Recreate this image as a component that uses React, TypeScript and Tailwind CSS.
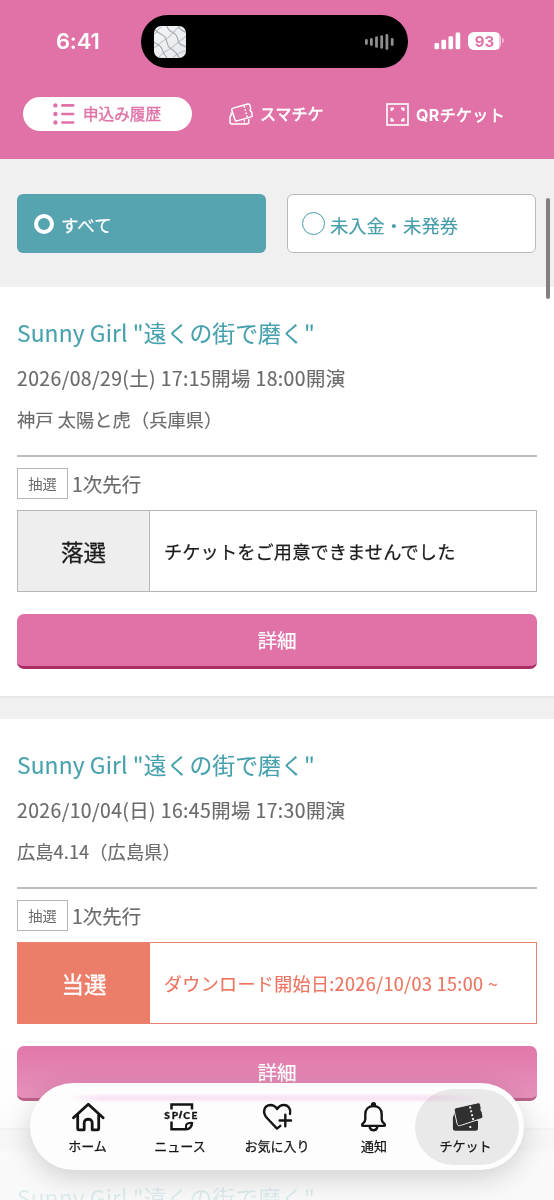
import type { ReactNode } from "react";

type Entry = {
  date: string;
  venue: string;
  won: boolean;
  status: string;
  message: string;
};

const entries: Entry[] = [
  {
    date: "2026/08/29(土) 17:15開場 18:00開演",
    venue: "神戸 太陽と虎（兵庫県）",
    won: false,
    status: "落選",
    message: "チケットをご用意できませんでした",
  },
  {
    date: "2026/10/04(日) 16:45開場 17:30開演",
    venue: "広島4.14（広島県）",
    won: true,
    status: "当選",
    message: "ダウンロード開始日:2026/10/03 15:00 ~",
  },
];

function StatusBar() {
  return (
    <div className="flex h-[83px] shrink-0 items-start pt-[15px] text-white">
      <div className="w-[141px] pl-[56px] pt-[11px] font-['Inter',sans-serif] text-[22px] font-semibold leading-[30px] tracking-[-0.2px]">
        6:41
      </div>
      <div className="flex h-[53px] w-[267px] items-center justify-between rounded-full bg-black px-[13px]">
        <svg width="32" height="32" viewBox="0 0 32 32">
          <defs>
            <clipPath id="art">
              <rect width="32" height="32" rx="7" />
            </clipPath>
            <linearGradient id="quilt" x1="0" y1="0" x2="1" y2="1">
              <stop offset="0" stopColor="#f5f6f8" />
              <stop offset="1" stopColor="#e4e7ea" />
            </linearGradient>
          </defs>
          <g clipPath="url(#art)" fill="none">
            <rect width="32" height="32" fill="url(#quilt)" />
            <g stroke="#c3c8cc" strokeWidth="1.2">
              <path d="M-1 9c4-2 4-6 9-8" />
              <path d="M-1 22c5-1 7-6 13-9s6-7 13-12" />
              <path d="M4 33c2-4 4-6 10-9s6-5 12-9 4-4 8-6" />
              <path d="M18 33c3-4 5-5 15-9" />
            </g>
            <g stroke="#a3a8ae" strokeWidth="1.1">
              <path d="M1 3c2 5 7 4 10 8s1 8 5 11 6 3 10 11" />
              <path d="M13-1c0 7 6 6 9 10s1 7 4 9 5 2 7 4" />
              <path d="M-1 15c3 4 7 3 9 8s2 6 6 10" />
              <path d="M24-1c1 5 5 6 9 8" />
            </g>
          </g>
        </svg>
        <svg width="31" height="18" viewBox="0 0 31 18" fill="#8e8e8e">
          <rect x="1" y="6" width="2.8" height="6" rx="1.4" />
          <rect x="6" y="5" width="2.8" height="8" rx="1.4" />
          <rect x="11.1" y="3.2" width="2.8" height="11.6" rx="1.4" />
          <rect x="16.3" y="2.2" width="2.8" height="13.6" rx="1.4" />
          <rect x="21.5" y="1" width="2.8" height="16" rx="1.4" />
          <rect x="26.8" y="5" width="2.8" height="8" rx="1.4" />
        </svg>
      </div>
      <svg className="ml-[26px] mt-[17px]" width="27" height="18" viewBox="0 0 27 18" fill="#fff">
        <rect x="0.5" y="11" width="4.6" height="6.3" rx="1.3" />
        <rect x="7.4" y="7.7" width="4.6" height="9.6" rx="1.3" />
        <rect x="14.5" y="4.3" width="4.6" height="13" rx="1.3" />
        <rect x="21.6" y="0.6" width="4.6" height="16.7" rx="1.3" />
      </svg>
      <div className="ml-[7px] mt-[17px] flex h-[18px] w-[33px] items-center justify-center rounded-[6px] bg-[linear-gradient(90deg,#ffffff_31px,#f3c8dd_31px)] pt-px font-['Inter',sans-serif] text-[15px] font-bold leading-none text-[#e072a7]">
        93
      </div>
      <div className="ml-px mt-[23px] h-[5px] w-[2px] rounded-r-full bg-[#f0b5d2]" />
    </div>
  );
}

function TicketOutline() {
  return (
    <svg width="24" height="24" viewBox="0 0 24 24" fill="none" stroke="#fff" strokeWidth="1.5" strokeLinejoin="round">
      <path d="M2.2 10.6v2.2c0 1.1-1.2 1.3-1.2 2.5v4.7c0 1.2.7 1.9 1.900 1.900h15c1.200 0 1.900-.7 1.900-1.900v-3.300" />
      <path d="M4.100 6.100 18.800 2c1.100-.3 1.800.1 2.100 1.200l.7 2.700c.2.900-.6 1.300-.4 2.200s1.100 1 1.300 1.800l.7 2.900c.3 1.100-.2 1.800-1.200 2.100L8.100 18.900c-1 .3-1.800-.1-2.100-1.200L2.900 8.400c-.4-1.200.2-2 1.200-2.300Z" />
      <path d="m15.200 4 3.100 11.400" strokeDasharray="1.800 1.500" />
      <path d="M15.300 17.800v3.600" strokeDasharray="1.600 1.200" />
    </svg>
  );
}

function Tabs() {
  return (
    <div className="flex h-[62px] items-center pl-[23px] text-[16px] text-white">
      <div className="flex h-[34px] w-[169px] items-center rounded-full bg-white pl-[30px] text-[#e072a7]">
        <svg width="22" height="22" viewBox="0 0 22 22" fill="#e072a7">
          <circle cx="2.400" cy="2.400" r="2.200" />
          <circle cx="2.400" cy="11" r="2.200" />
          <circle cx="2.400" cy="19.500" r="2.200" />
          <rect x="8" y="1.100" width="13.500" height="2.600" rx="1.300" />
          <rect x="8" y="9.700" width="13.500" height="2.600" rx="1.300" />
          <rect x="8" y="18.200" width="13.500" height="2.600" rx="1.300" />
        </svg>
        <span className="ml-[8px] pb-[2px] text-[15.6px] leading-6 [-webkit-text-stroke:0.4px]">申込み履歴</span>
      </div>
      <div className="ml-[37px] flex w-[157px] items-center">
        <TicketOutline />
        <span className="ml-[7px] pb-[2px] text-[16px] leading-6 [-webkit-text-stroke:0.6px]">スマチケ</span>
      </div>
      <div className="flex items-center">
        <svg width="23" height="23" viewBox="0 0 23 23" fill="none" stroke="#fff" strokeWidth="1.600">
          <rect x="1" y="1" width="21" height="21" />
          <path d="M5.500 8V5.500H8M15 5.500h2.500V8M17.500 15v2.500H15M8 17.500H5.500V15" strokeWidth="2" />
        </svg>
        <span className="ml-[7px] whitespace-nowrap text-[16px] leading-6 tracking-[0.35px] [-webkit-text-stroke:0.6px]">
          <span className="font-['Inter',sans-serif] font-bold [-webkit-text-stroke:0px]">QR</span>チケット
        </span>
      </div>
    </div>
  );
}

function Filters() {
  return (
    <div className="flex h-[128px] gap-[21px] bg-[#f0f0f0] px-[17px] pt-[35px] text-[18.3px]">
      <div className="flex h-[59px] w-[249px] items-center rounded-[6px] bg-[#57a4b1] pl-[17px] text-white">
        <span className="size-[20px] rounded-full border-[4.5px] border-white" />
        <span className="ml-[7px] pt-[3px] text-[17.6px] leading-8 [-webkit-text-stroke:0.25px]">すべて</span>
      </div>
      <div className="flex h-[59px] w-[249px] items-center rounded-[6px] border border-[#b9b9b9] bg-white pl-[14px] text-[#479da9]">
        <span className="size-[23px] rounded-full border border-[#479da9]" />
        <span className="ml-[5px] pt-[2px] leading-8 [-webkit-text-stroke:0.15px]">未入金・未発券</span>
      </div>
    </div>
  );
}

function EntryCard({ entry }: { entry: Entry }) {
  const frame = entry.won ? "border-[#e8816f]" : "border-[#b5b7b5]";
  return (
    <>
      <section className="flex h-[411px] shrink-0 flex-col border-b-2 border-[#e6e6e6] bg-white px-[17px] pt-[24px] text-[#6b6b6b]">
        <h2 className="h-[45px] whitespace-nowrap text-[22.8px] leading-[44px] tracking-[0.1px] text-[#47a0ad] [-webkit-text-stroke:0.1px]">
          Sunny Girl "遠くの街で磨く"
        </h2>
        <p className="h-[43px] whitespace-nowrap text-[19.4px] leading-[43px] tracking-[0.4px] [-webkit-text-stroke:0.15px]">{entry.date}</p>
        <p className="h-[56px] whitespace-nowrap text-[18.2px] leading-[41px] tracking-[0.1px] [-webkit-text-stroke:0.15px]">{entry.venue}</p>
        <div className="flex h-[55px] items-start border-t-2 border-[#bdbdbd] pt-[11px]">
          <span className="flex h-[31px] w-[51px] items-center justify-center border border-[#b5b7b5] text-[14.2px]">
            抽選
          </span>
          <span className="ml-[4px] text-[19.4px] leading-[31px] tracking-[0.1px] [-webkit-text-stroke:0.15px]">1次先行</span>
        </div>
        <div className={`flex h-[82px] border ${frame}`}>
          <div
            className={`flex w-[132px] items-center justify-center pt-px text-[22.5px] [-webkit-text-stroke:0.3px] ${
              entry.won ? "bg-[#ec7d69] text-white" : "border-r border-[#b5b7b5] bg-[#eeeeee] text-[#1c1c1c]"
            }`}
          >
            {entry.status}
          </div>
          <div
            className={`flex items-center whitespace-nowrap pl-[14px] ${
              entry.won
                ? "pt-px text-[18px] tracking-[0.36px] text-[#ec7460] [-webkit-text-stroke:0.15px]"
                : "pt-px text-[18.2px] tracking-[0.12px] text-[#1c1c1c] [-webkit-text-stroke:0.25px]"
            }`}
          >
            {entry.message}
          </div>
        </div>
        <button className="mt-[22px] h-[55px] shrink-0 rounded-[7px] border-b-[3px] border-[#a92e64] bg-[#e072a7] text-[19.6px] text-white [-webkit-text-stroke:0.2px]">
          詳細
        </button>
      </section>
      <div className="h-[21px] shrink-0 bg-[#f0f0f0]" />
    </>
  );
}

const HomeIcon = (
  <svg width="34" height="32" viewBox="0 0 34 32" fill="none" stroke="#151515" strokeWidth="2.800" strokeLinecap="round" strokeLinejoin="round">
    <path d="M2.500 17.800 17.300 4.300l14.800 13.500" />
    <path d="M6.700 15.500V28.500c0 .9.400 1.300 1.300 1.300h5.200V23c0-5 8-5 8 0v6.800h5.200c.9 0 1.300-.4 1.300-1.300V15.500" />
  </svg>
);

const NewsIcon = (
  <svg width="36" height="32" viewBox="0 0 36 32" fill="none" stroke="#151515" strokeWidth="2.500">
    <path d="M9.500 9.500V4.600h20.500v4.900M9.500 21.500v7.800h14.500c3.500 0 6-2.600 6-7.300" />
    <path d="M23.500 29c1-1.500.2-3.200.9-4.500s3-1.500 5.400-1.800" strokeWidth="2" />
    <g fill="#151515" stroke="#151515" strokeWidth="0.300" fontFamily="Lato, sans-serif" fontWeight="900" fontSize="10.200">
      <text x="2.200" y="19.400">S</text>
      <text x="9.800" y="19.400">P</text>
      <text x="21.200" y="19.400">C</text>
      <text x="29.600" y="19.400">E</text>
      <text x="17" y="18.400" transform="rotate(16 18.500 15)">I</text>
    </g>
  </svg>
);

const HeartIcon = (
  <svg width="34" height="32" viewBox="0 0 34 32" fill="none" stroke="#151515" strokeWidth="2.400" strokeLinecap="round" strokeLinejoin="round">
    <path d="M20.300 25.800 17 28.600 7.200 18.200C1.500 12.300 4.500 5.200 10.300 5c3.100 0 5.300 1.500 6.900 4 1.500-2.500 3.900-4 6.600-4 4.600.1 7.500 4.300 6.200 8.900" />
    <path d="M25.300 14.800v11.400M19.600 20.500H31" />
  </svg>
);

const BellIcon = (
  <svg width="34" height="32" viewBox="0 0 34 32" fill="none" stroke="#151515" strokeWidth="2.400" strokeLinecap="round" strokeLinejoin="round">
    <path d="M16.500 6c-5 0-8.200 3.500-8.200 8.300v4.900c0 3.700-3.200 3.900-3.200 5.700 0 .7.400 1 1.100 1h20.600c.7 0 1.100-.3 1.100-1 0-1.800-3.200-2-3.200-5.700v-4.900c0-4.800-3.200-8.300-8.200-8.300Z" />
    <circle cx="16.500" cy="4.500" r="1.400" fill="#151515" />
    <path d="M12.800 27.500c1.300 3.700 6.100 3.700 7.400 0" />
  </svg>
);

const TicketIcon = (
  <svg width="34" height="32" viewBox="0 0 34 32" fill="#303030">
    <path d="M3.800 13.500c.8 2-.9 2.400-.9 4.300v10.500c0 1.700.9 2.500 2.500 2.500h20c1.700 0 2.600-.8 2.600-2.500V21Z" />
    <path d="M20.300 26v3.500" fill="none" stroke="#f2f2f2" strokeWidth="1.900" strokeDasharray="2 1.500" />
    <path
      d="M6.300 7.700 27.500 2.900c1.600-.4 2.700.3 3 1.900l.6 2.700c.2 1-.4 1.400-.2 2.400s1 1.300 1.200 2.300l.7 3.500c.3 1.500-.4 2.600-1.900 3L10.300 25.600c-1.700.5-2.800-.2-3.200-1.800L4.300 11c-.4-1.700.3-2.900 2-3.300Z"
      stroke="#ebebeb"
      strokeWidth="1"
    />
    <path d="m20 6.600 3.300 13.500" fill="none" stroke="#f2f2f2" strokeWidth="1.900" strokeDasharray="2 1.900" />
  </svg>
);

function NavItem({
  icon,
  label,
  className,
  labelClass = "",
}: {
  icon: ReactNode;
  label: string;
  className: string;
  labelClass?: string;
}) {
  return (
    <div className={`flex h-[76px] flex-col items-center pt-[11px] ${className}`}>
      {icon}
      <span
        className={`mt-[4px] whitespace-nowrap text-[13px] leading-[20px] text-[#151515] [-webkit-text-stroke:0.25px] ${labelClass}`}
      >
        {label}
      </span>
    </div>
  );
}

export default function App() {
  return (
    <div className="relative flex h-[1200px] w-[554px] flex-col overflow-hidden bg-white font-['Noto_Sans_CJK_JP',sans-serif]">
      <header className="h-[159px] shrink-0 bg-[#e072a7]">
        <StatusBar />
        <Tabs />
      </header>
      <main className="flex flex-col">
        <Filters />
        {entries.map((entry) => (
          <EntryCard key={entry.date} entry={entry} />
        ))}
        <section className="h-[411px] shrink-0 bg-white px-[17px] pt-[24px]">
          <h2 className="text-[22.8px] leading-[45px] tracking-[0.1px] text-[#47a0ad]">Sunny Girl "遠くの街で磨く"</h2>
        </section>
      </main>

      <div className="absolute right-[4px] top-[198px] h-[101px] w-[4px] rounded-full bg-[#808080]" />

      <div className="absolute inset-x-0 bottom-0 h-[165px] bg-[linear-gradient(180deg,rgba(250,250,250,0)_0%,rgba(250,250,250,0.23)_38%,rgba(249,249,249,0.78)_60%,rgba(248,248,248,0.85)_100%)]" />

      <nav className="absolute bottom-[30px] left-[30px] flex h-[87px] w-[494px] items-start rounded-full bg-[#fdfdfd] pl-[11px] pt-[6px] shadow-[0_8px_28px_rgba(0,0,0,0.17)]">
        <NavItem icon={HomeIcon} label="ホーム" className="w-[93px]" />
        <NavItem icon={NewsIcon} label="ニュース" className="w-[92px]" />
        <NavItem icon={HeartIcon} label="お気に入り" className="w-[102px]" />
        <NavItem icon={BellIcon} label="通知" className="w-[87px] pl-[5px]" />
        <NavItem
          icon={TicketIcon}
          label="チケット"
          className="w-[104px] rounded-full bg-[#e9e9e9]"
          labelClass="mr-[3px]"
        />
        <div className="absolute left-[38px] top-[12px] h-[6px] w-[418px] rounded-full bg-[linear-gradient(90deg,#fbe5f700,#fbe5f7_8%,#fbe5f7_84%,#fbe5f780_92%,#fbe5f700)] mix-blend-multiply blur-[1px]" />
      </nav>
    </div>
  );
}
